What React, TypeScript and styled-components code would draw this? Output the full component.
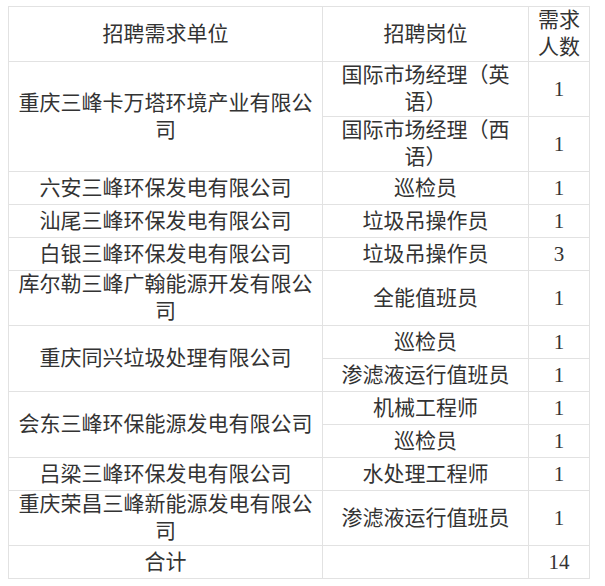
import styled, { createGlobalStyle } from 'styled-components';

const GlobalStyle = createGlobalStyle`
  body {
    margin: 0;
    background: #fff;
  }
`;

const Page = styled.div`
  padding: 6px 0 0 8px;
`;

const Table = styled.table`
  border-collapse: collapse;
  table-layout: fixed;
  width: 581px;
  font-family: "Liberation Serif", "Noto Sans CJK SC", serif;
  font-size: 21px;
  line-height: 27px;
  color: #333;
`;

const Row = styled.tr<{ $tall?: boolean }>`
  height: ${({ $tall }) => ($tall ? '55px' : '33px')};
`;

const Cell = styled.td`
  border: 1px solid #e2e2e2;
  padding: 0 9px;
  text-align: center;
  vertical-align: middle;
  word-break: break-all;
`;

const HeadCell = styled(Cell).attrs({ as: 'th' })`
  font-weight: normal;
`;

const NumCell = styled(Cell)`
  padding: 0 2px;
`;

type Job = { title: string; count: string; tall?: boolean };
type Unit = { name: string; jobs: Job[] };

const units: Unit[] = [
  {
    name: '重庆三峰卡万塔环境产业有限公司',
    jobs: [
      { title: '国际市场经理（英语）', count: '1', tall: true },
      { title: '国际市场经理（西语）', count: '1', tall: true },
    ],
  },
  { name: '六安三峰环保发电有限公司', jobs: [{ title: '巡检员', count: '1' }] },
  { name: '汕尾三峰环保发电有限公司', jobs: [{ title: '垃圾吊操作员', count: '1' }] },
  { name: '白银三峰环保发电有限公司', jobs: [{ title: '垃圾吊操作员', count: '3' }] },
  {
    name: '库尔勒三峰广翰能源开发有限公司',
    jobs: [{ title: '全能值班员', count: '1', tall: true }],
  },
  {
    name: '重庆同兴垃圾处理有限公司',
    jobs: [
      { title: '巡检员', count: '1' },
      { title: '渗滤液运行值班员', count: '1' },
    ],
  },
  {
    name: '会东三峰环保能源发电有限公司',
    jobs: [
      { title: '机械工程师', count: '1' },
      { title: '巡检员', count: '1' },
    ],
  },
  { name: '吕梁三峰环保发电有限公司', jobs: [{ title: '水处理工程师', count: '1' }] },
  {
    name: '重庆荣昌三峰新能源发电有限公司',
    jobs: [{ title: '渗滤液运行值班员', count: '1', tall: true }],
  },
];

export default function App() {
  return (
    <Page>
      <GlobalStyle />
      <Table>
        <colgroup>
          <col style={{ width: 314 }} />
          <col style={{ width: 206 }} />
          <col style={{ width: 61 }} />
        </colgroup>
        <thead>
          <Row $tall>
            <HeadCell>招聘需求单位</HeadCell>
            <HeadCell>招聘岗位</HeadCell>
            <HeadCell>需求人数</HeadCell>
          </Row>
        </thead>
        <tbody>
          {units.map((unit) =>
            unit.jobs.map((job, i) => (
              <Row key={unit.name + i} $tall={job.tall}>
                {i === 0 && <Cell rowSpan={unit.jobs.length}>{unit.name}</Cell>}
                <Cell>{job.title}</Cell>
                <NumCell>{job.count}</NumCell>
              </Row>
            ))
          )}
          <Row>
            <Cell>合计</Cell>
            <Cell />
            <NumCell>14</NumCell>
          </Row>
        </tbody>
      </Table>
    </Page>
  );
}
